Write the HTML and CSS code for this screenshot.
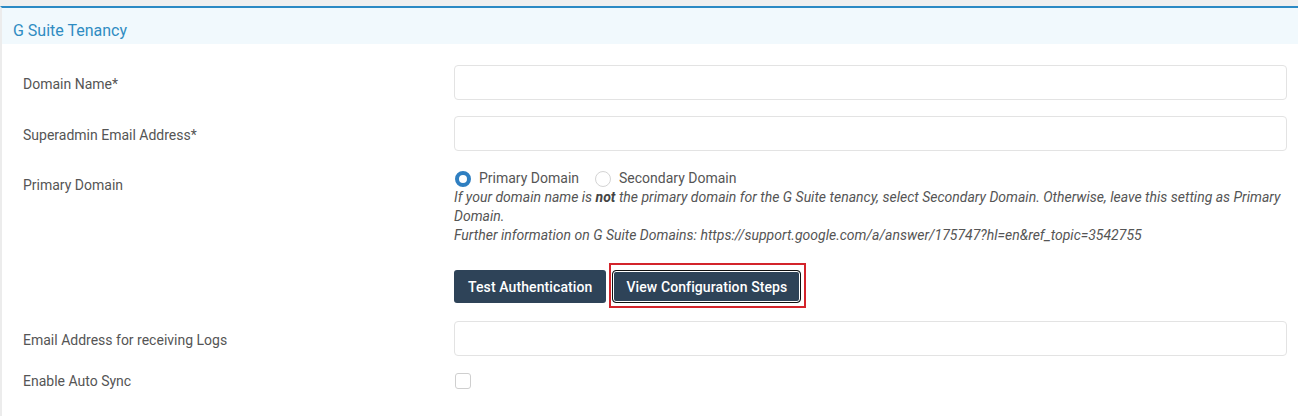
FILE: index.html
```html
<!DOCTYPE html>
<html>
<head>
<meta charset="utf-8">
<link rel="stylesheet" href="styles.css">
</head>
<body>
<div class="panel">
  <div class="panel-head">G Suite Tenancy</div>
  <div class="panel-body">
    <div class="row row-input">
      <label class="lbl">Domain Name*</label>
      <div class="ctl"><input class="txt" type="text"></div>
    </div>
    <div class="row row-input">
      <label class="lbl">Superadmin Email Address*</label>
      <div class="ctl"><input class="txt" type="text"></div>
    </div>
    <div class="row row-radio">
      <label class="lbl lbl-top">Primary Domain</label>
      <div class="ctl">
        <div class="radios">
          <span class="radio on"></span><span class="rtext">Primary Domain</span>
          <span class="radio"></span><span class="rtext">Secondary Domain</span>
        </div>
        <div class="help">If your domain name is <b>not</b> the primary domain for the G Suite tenancy, select Secondary Domain. Otherwise, leave this setting as Primary Domain.<br>Further information on G Suite Domains: https://support.google.com/a/answer/175747?hl=en&amp;ref_topic=3542755</div>
      </div>
    </div>
    <div class="row row-btns">
      <div class="lbl"></div>
      <div class="ctl btns">
        <button class="btn">Test Authentication</button>
        <span class="focus-wrap">
          <button class="btn btn-focus">View Configuration Steps</button>
          <span class="highlight"></span>
        </span>
      </div>
    </div>
    <div class="row row-input row-logs">
      <label class="lbl">Email Address for receiving Logs</label>
      <div class="ctl"><input class="txt" type="text"></div>
    </div>
    <div class="row row-check">
      <label class="lbl">Enable Auto Sync</label>
      <div class="ctl"><span class="check"></span></div>
    </div>
  </div>
</div>
</body>
</html>
```
FILE: styles.css
```css
* { box-sizing: border-box; }
html, body { margin: 0; padding: 0; }
body {
  background: #f0f0f0;
  font-family: Roboto, "Liberation Sans", sans-serif;
  font-size: 14px;
  color: #555;
  padding-top: 6px;
  height: 416px;
  overflow: hidden;
}
.panel {
  background: #fff;
  border-top: 2px solid #2d8ac4;
  border-left: 2px solid #ececec;
  height: 410px;
}
.panel-head {
  background: #f1f9fd;
  color: #2f8cc2;
  font-size: 16px;
  height: 36px;
  line-height: 28px;
  padding-left: 11px;
  padding-top: 9px;
}
.panel-body {
  display: flex;
  flex-direction: column;
  padding: 21px 11px 0 21px;
}
.row {
  display: grid;
  grid-template-columns: 431px 1fr;
  align-items: center;
}
.row-input { margin-bottom: 16px; }
.row-input .lbl { padding-top: 3px; }
.lbl { color: #555; }
.txt {
  display: block;
  width: 100%;
  height: 35px;
  border: 1px solid #e3e3e3;
  border-radius: 4px;
  background: #fff;
}
.row-radio { align-items: start; margin-top: 2px; }
.lbl-top { padding-top: 7px; line-height: 19px; }
.radios {
  display: flex;
  align-items: center;
  height: 19px;
  line-height: 19px;
}
.radio {
  width: 16px;
  height: 16px;
  border-radius: 50%;
  border: 1px solid #d4d4d4;
  background: #fff;
  margin-left: 1px;
}
.radio.on {
  border: 4px solid #2f7fc1;
}
.rtext { margin: 0 15px 0 8px; color: #555; }
.help {
  font-style: italic;
  line-height: 19px;
  color: #555;
}
.help b { font-weight: bold; color: #444; }
.row-btns { margin-top: 25px; }
.btns { display: flex; align-items: center; gap: 6px; }
.btn {
  font-family: Roboto, "Liberation Sans", sans-serif;
  font-size: 14px;
  font-weight: 500;
  letter-spacing: 0.1px;
  color: #fff;
  background: #2e4358;
  border: none;
  border-radius: 3px;
  height: 33px;
  padding: 0 14px;
}
.focus-wrap { position: relative; display: inline-block; }
.btn-focus {
  width: 189px;
  padding: 0;
  border: 1px solid #111;
  box-shadow: inset 0 0 0 1px #fff;
  border-radius: 4px;
  display: block;
}
.highlight {
  position: absolute;
  left: -3px;
  top: -7px;
  right: -5px;
  bottom: -5px;
  border: 2px solid #d3242b;
}
.row-logs { margin-top: 18px; margin-bottom: 17px; }
.check {
  display: block;
  width: 16px;
  height: 16px;
  border: 1px solid #cfcfcf;
  border-radius: 3px;
  margin-left: 1px;
}
```
